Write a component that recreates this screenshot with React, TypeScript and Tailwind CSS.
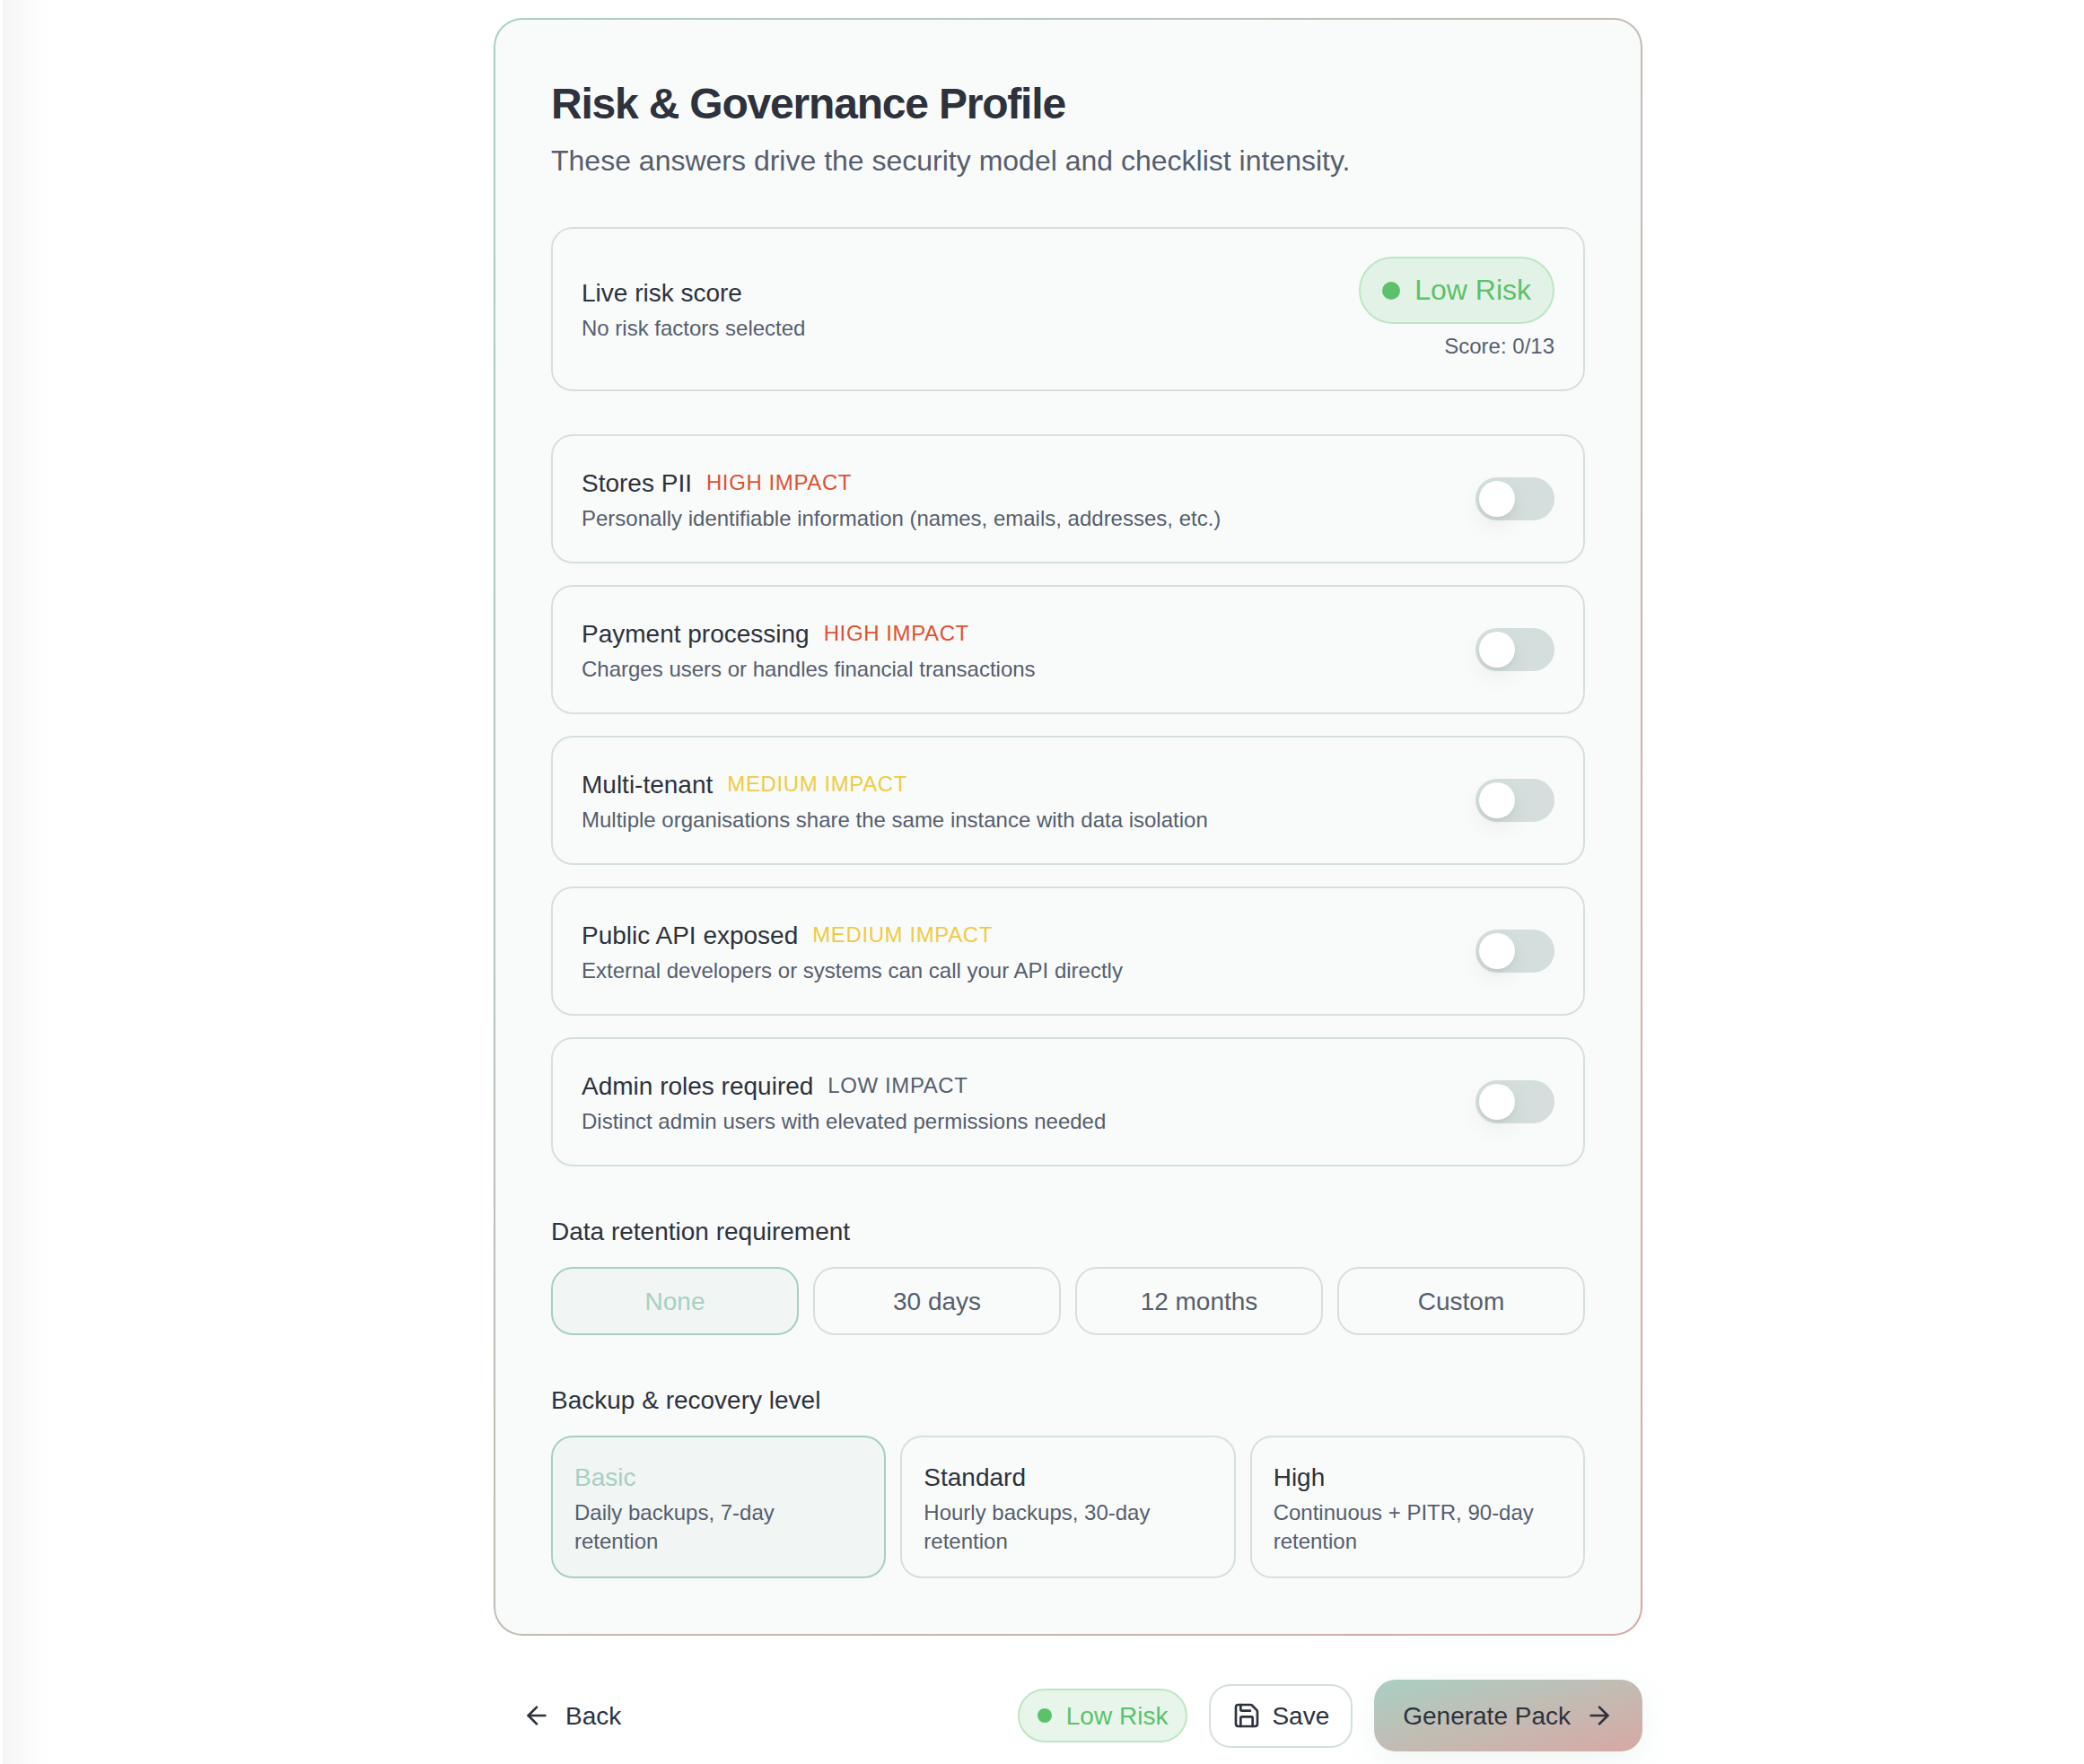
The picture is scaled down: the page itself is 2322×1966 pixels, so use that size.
import { ArrowLeft, ArrowRight, Save } from "lucide-react";

type Row = { title: string; impact: string; tone: string; desc: string };

const rows: Row[] = [
  { title: "Stores PII", impact: "HIGH IMPACT", tone: "text-[#e0512f]", desc: "Personally identifiable information (names, emails, addresses, etc.)" },
  { title: "Payment processing", impact: "HIGH IMPACT", tone: "text-[#e0512f]", desc: "Charges users or handles financial transactions" },
  { title: "Multi-tenant", impact: "MEDIUM IMPACT", tone: "text-[#eecb45]", desc: "Multiple organisations share the same instance with data isolation" },
  { title: "Public API exposed", impact: "MEDIUM IMPACT", tone: "text-[#eecb45]", desc: "External developers or systems can call your API directly" },
  { title: "Admin roles required", impact: "LOW IMPACT", tone: "text-[#565e6e]", desc: "Distinct admin users with elevated permissions needed" },
];

const retention = ["None", "30 days", "12 months", "Custom"];

const backups = [
  { title: "Basic", desc: "Daily backups, 7-day retention" },
  { title: "Standard", desc: "Hourly backups, 30-day retention" },
  { title: "High", desc: "Continuous + PITR, 90-day retention" },
];

export default function App() {
  return (
    <div className="flex h-[1966px] w-[2322px] overflow-hidden bg-white font-['Liberation_Sans',sans-serif] text-[#2d323d]">
      <div className="flex w-[58px] shrink-0 bg-white pl-[3px]">
        <div className="h-full w-[52px] bg-gradient-to-r from-[#f6f6f6] to-white" />
      </div>
      <main className="flex flex-1 justify-center pt-[20px]">
        <div className="flex w-[1280px] flex-col">
          <div className="rounded-[32px] bg-gradient-to-br from-[#a8cfc3] to-[#d6a8a4] p-[2px]">
            <section className="rounded-[30px] bg-[#f9fbfa] px-[62px] pb-[62px] pt-[65px]">
              <h1 className="text-[48px] font-bold leading-[58px] tracking-[-1.2px] text-[#2d323d]">Risk &amp; Governance Profile</h1>
              <p className="mt-[14px] text-[32px] leading-[40px] text-[#565e6e]">These answers drive the security model and checklist intensity.</p>

              <div className="mt-[54px] flex items-center justify-between rounded-[24px] border-2 border-[#d5e0dd] px-[32px] py-[31px]">
                <div className="pt-[2px]">
                  <div className="text-[28px] leading-[40px] text-[#2d323d]">Live risk score</div>
                  <div className="mt-[1px] text-[24px] leading-[36px] text-[#565e6e]">No risk factors selected</div>
                </div>
                <div className="flex flex-col items-end gap-[8px]">
                  <div className="flex h-[75px] items-center gap-[16px] rounded-full border-2 border-[#bde6c3] bg-[#e3f2e6] px-[24px] text-[32px] text-[#5cc16b]">
                    <span className="h-[20px] w-[20px] rounded-full bg-[#5cc16b]" />
                    <span className="pb-[2px]">Low Risk</span>
                  </div>
                  <div className="text-[24px] leading-[34px] text-[#565e6e]">Score: 0/13</div>
                </div>
              </div>

              <div className="mt-[48px] flex flex-col gap-[24px]">
                {rows.map((r) => (
                  <div key={r.title} className="flex h-[144px] items-center justify-between rounded-[24px] border-2 border-[#d5e0dd] px-[32px]">
                    <div className="pt-[2px]">
                      <div className="flex items-center gap-[16px]">
                        <span className="pt-[2px] text-[28px] leading-[38px] text-[#2d323d]">{r.title}</span>
                        <span className={`text-[24px] leading-[40px] tracking-[0.6px] ${r.tone}`}>{r.impact}</span>
                      </div>
                      <div className="mt-[2px] text-[24px] leading-[36px] text-[#565e6e]">{r.desc}</div>
                    </div>
                    <div className="flex h-[48px] w-[88px] items-center rounded-full bg-[#d4dedc] p-[4px]">
                      <span className="h-[40px] w-[40px] rounded-full bg-white shadow-[0_10px_30px_-6px_rgba(0,0,0,0.12),0_4px_8px_-4px_rgba(0,0,0,0.12)]" />
                    </div>
                  </div>
                ))}
              </div>

              <div className="mt-[53px] text-[28px] leading-[40px] text-[#2d323d]">Data retention requirement</div>
              <div className="mt-[19px] grid grid-cols-4 gap-[16px]">
                {retention.map((o, i) => (
                  <div
                    key={o}
                    className={
                      i === 0
                        ? "flex h-[76px] items-center justify-center rounded-[24px] border-2 border-[#a8cfc3] bg-[#f1f5f4] pt-[2px] text-[28px] text-[#a8cfc3]"
                        : "flex h-[76px] items-center justify-center rounded-[24px] border-2 border-[#d5e0dd] pt-[2px] text-[28px] text-[#565e6e]"
                    }
                  >
                    {o}
                  </div>
                ))}
              </div>

              <div className="mt-[53px] text-[28px] leading-[40px] text-[#2d323d]">Backup &amp; recovery level</div>
              <div className="mt-[19px] grid grid-cols-3 gap-[16px]">
                {backups.map((b, i) => (
                  <div
                    key={b.title}
                    className={
                      i === 0
                        ? "h-[159px] rounded-[24px] border-2 border-[#a8cfc3] bg-[#f1f5f4] px-[24px] pt-[25px]"
                        : "h-[159px] rounded-[24px] border-2 border-[#d5e0dd] px-[24px] pt-[25px]"
                    }
                  >
                    <div className={i === 0 ? "text-[28px] leading-[40px] text-[#a8cfc3]" : "text-[28px] leading-[40px] text-[#2d323d]"}>{b.title}</div>
                    <div className="mt-[3px] text-[24px] leading-[32px] text-[#565e6e]">{b.desc}</div>
                  </div>
                ))}
              </div>
            </section>
          </div>

          <footer className="mt-[49px] flex h-[80px] items-center justify-between">
            <div className="flex items-center gap-[16px] pl-[32px] text-[28px] text-[#2d323d]">
              <ArrowLeft size={32} />
              <span className="pt-[2px]">Back</span>
            </div>
            <div className="flex items-center gap-[24px]">
              <div className="flex h-[60px] items-center gap-[16px] rounded-full border-2 border-[#bde6c3] bg-[#e8f5ea] px-[20px] text-[28px] text-[#5cc16b]">
                <span className="h-[16px] w-[16px] rounded-full bg-[#5cc16b]" />
                <span className="pt-[2px]">Low Risk</span>
              </div>
              <div className="flex h-[71px] items-center gap-[12px] rounded-[24px] border-2 border-[#d5e0dd] bg-white px-[24px] text-[28px] text-[#2d323d]">
                <Save size={32} />
                <span className="pt-[2px]">Save</span>
              </div>
              <div className="flex h-[80px] items-center gap-[16px] rounded-[24px] bg-gradient-to-br from-[#a8cfc3] to-[#d6a8a4] px-[32px] text-[28px] text-[#2d323d] shadow-[0_10px_40px_-6px_rgba(168,207,195,0.25)]">
                <span className="pt-[2px]">Generate Pack</span>
                <ArrowRight size={32} />
              </div>
            </div>
          </footer>
        </div>
      </main>
    </div>
  );
}
